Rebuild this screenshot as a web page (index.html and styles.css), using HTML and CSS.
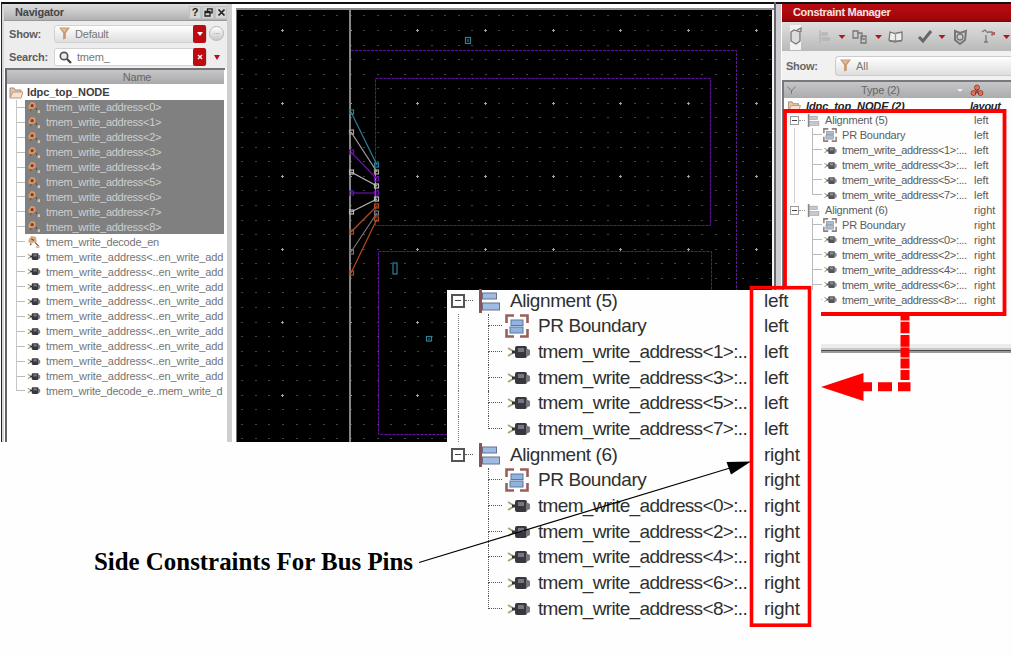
FILE: index.html
```html
<!DOCTYPE html>
<html lang="en">
<head>
<meta charset="utf-8">
<title>Side Constraints For Bus Pins</title>
<link rel="stylesheet" href="styles.css">
</head>
<body>
<svg class="defs" width="0" height="0">
  <symbol id="i-pin" viewBox="0 0 24 16"><path d="M1 4l5 3M1 12l5-3" stroke="#a9a67c" stroke-width="2"/><path d="M5 8h4" stroke="#333" stroke-width="3"/><rect x="8" y="2" width="12" height="12" rx="2" fill="#37373d"/><rect x="11" y="4" width="6" height="4" fill="#77777f"/><path d="M19 4l4 2v5l-4 2z" fill="#77777b"/></symbol>
  <symbol id="i-align" viewBox="0 0 21 24"><path d="M1.500 0v24" stroke="#8e5254" stroke-width="3"/><rect x="3.500" y="4" width="14" height="6" fill="#9fbbe2" stroke="#66718d"/><rect x="3.500" y="14" width="17" height="7" fill="#9fbbe2" stroke="#66718d"/></symbol>
  <symbol id="i-bound" viewBox="0 0 24 24"><path d="M1.500 9V1.500H9M15 1.500h7.500V9M22.500 15v7.500H15M9 22.500H1.500V15" fill="none" stroke="#98605b" stroke-width="2.600"/><rect x="6" y="6" width="12" height="5.500" fill="#8fb4e2" stroke="#5d76a0"/><rect x="5" y="13" width="13" height="6" fill="#8fb4e2" stroke="#5d76a0"/></symbol>
  <symbol id="i-net" viewBox="0 0 14 14"><path d="M1 5l3-4 4 1 1 5-4 2-4-1z" fill="#d59c69"/><circle cx="5" cy="5" r="1.700" fill="#8b332b"/><path d="M4 9l-1 2M9 7l1 3" stroke="#5b4033"/><rect x="11" y="10" width="2.500" height="3" fill="#dfc2ae"/></symbol>
  <symbol id="i-bulb" viewBox="0 0 14 14"><path d="M1 5l3-4 5 1 1 5-5 2-4-1z" fill="#d7ab81"/><path d="M4 4l3 2M8 8l4 4M4 9l-1 2" stroke="#72533c" stroke-width="1.300"/><path d="M9 13h4" stroke="#dfb994" stroke-width="2"/></symbol>
  <symbol id="i-folder" viewBox="0 0 14 13"><path d="M1 12V2h4l1 2h6v3" fill="#e9c3a5" stroke="#a58f80"/><path d="M1 12l3-6h10l-2 6z" fill="#f5e2d2" stroke="#b99a82"/></symbol>
  <symbol id="i-funnel" viewBox="0 0 12 13"><path d="M0 0h12L7.500 6v6l-3 1V6z" fill="#c99a72"/><path d="M2 1h7L6 5z" fill="#e2bb97"/></symbol>
</svg>
<div class="window">
  <section class="nav">
    <div class="nav-title"><b>Navigator</b><span class="win-btns"><i>?</i>
      <i><svg width="9" height="9"><path d="M3.500 3V.9h4.600v4H6M1 3.500h5v4.500H1zM1 4.500h5" fill="none" stroke="#222" stroke-width="1.300"/></svg></i>
      <i><svg width="9" height="9"><path d="M1.500 1.500l6 6M7.500 1.500l-6 6" stroke="#222" stroke-width="1.700"/></svg></i></span></div>
    <div class="field-row r-show"><label>Show:</label>
      <div class="field grad"><svg width="11" height="13"><use href="#i-funnel"/></svg><span>Default</span><em><svg width="6" height="4"><path d="M0 0h6L3 4z" fill="#fff"/></svg></em></div>
      <div class="round">...</div></div>
    <div class="field-row"><label>Search:</label>
      <div class="field"><svg width="13" height="13" viewBox="0 0 13 13"><circle cx="5" cy="5" r="3.700" fill="#eee" stroke="#555" stroke-width="1.700"/><path d="M8 8l4 4" stroke="#444" stroke-width="2.300"/></svg><span>tmem_</span><em><svg width="6" height="6"><path d="M1 1l4 4M5 1L1 5" stroke="#fff" stroke-width="1.300"/></svg></em></div>
      <svg class="tri" width="6" height="5"><path d="M0 0h6L3 5z" fill="#b90f12"/></svg></div>
    <div class="nav-table">
      <div class="nav-head">Name</div>
      <div class="nav-root"><svg width="14" height="13"><use href="#i-folder"/></svg><b>ldpc_top_NODE</b></div>
      <div class="nav-rows" id="nav-rows"></div>
    </div>
  </section>
  <section class="canvas">
    <svg id="layout" width="536" height="432" viewBox="237 10 536 432">
      <g id="grid"></g>
      <path d="M350 9v433" stroke="#858585" stroke-width="2"/>
      <g fill="none" stroke="#6410a4" stroke-width="1" stroke-dasharray="3 1">
        <path d="M351 50.500H736.500V300"/><path d="M375.500 78.500H710.500V225.500H375.500z"/><path d="M378.500 251.500H711.500V434.500H378.500z"/>
      </g>
      <g fill="none" stroke="#2e7f97" stroke-width="1.200">
        <rect x="465.500" y="37.500" width="5" height="6"/><path d="M468 39v3"/><rect x="393" y="263" width="4" height="11"/><rect x="426.500" y="336.500" width="5" height="4.500"/><path d="M428 339h2"/>
      </g>
      <path d="M375.500 170v30" stroke="#999"/>
      <g id="fan" fill="none"></g>
    </svg>
  </section>
  <section class="cm">
    <div class="cm-title">Constraint Manager</div>
    <div class="cm-tools">
      <svg width="229" height="29" viewBox="782 22 229 29">
        <rect x="790" y="25" width="11" height="25" fill="#f2f2f2"/>
        <g fill="none" stroke="#777" stroke-width="1.300">
          <path d="M791 41V32l3-2 6 2v9l-4 3zM797 30l4-2v4" fill="#ddd"/>
          <path d="M820 30v13M822 33h5v2h-5zM822 38h7v2h-7z" stroke="#b4b4b4"/>
          <path d="M853 31h5v7h-5zM857 33h5v7M861 36h5v7h-5zM863 39h2"/>
          <path d="M890 32l5 1.500 7-1.500v8l-7 2-6-2z" fill="#eee"/><path d="M895.500 33v9" stroke="#998"/>
          <path d="M889 41h13"/>
          <path d="M955 31l5 2 6-2-1 9-5 4-5-4z" stroke-width="2"/><circle cx="960" cy="37" r="3"/>
          <path d="M982 32l3-2 3 3M988 32h4v4M986 35v7M984 42h4"/>
        </g>
        <path d="M919 37l4 4 8-10" fill="none" stroke="#666" stroke-width="3"/>
        <rect x="992" y="32" width="3" height="3" fill="#a66"/>
        <path d="M838.500 35h7l-3.500 4zM875 35h7l-3.500 4zM938.500 35h7l-3.500 4zM1003 35h7l-3.500 4z" fill="#b4161a"/>
      </svg>
    </div>
    <div class="cm-show"><label>Show:</label><div><svg width="11" height="13"><use href="#i-funnel"/></svg><span>All</span></div></div>
    <div class="cm-body">
      <div class="cm-head"><svg width="9" height="9"><path d="M.5.500L4.500 5l4-4.500M4.500 5v3" fill="none" stroke="#777"/></svg><span>Type (2)</span><i></i>
        <svg class="balls" width="15" height="13"><g fill="#d9755f" stroke="#a3402f"><circle cx="7" cy="3.500" r="2.500"/><circle cx="3.500" cy="9" r="2.500"/><circle cx="10.500" cy="9" r="2.500"/></g><path d="M5 5l4 5M9 5l-4 5" stroke="#8a2318"/></svg></div>
      <div class="cm-root"><svg width="14" height="12"><use href="#i-folder"/></svg><b>ldpc_top_NODE (2)</b><b class="lay">layout</b></div>
      <div class="tree small" id="tree-small"></div>
    </div>
    <div class="cm-foot"></div>
  </section>
</div>
<div class="callout"><div class="tree big" id="tree-big"></div></div>
<svg class="marks" width="1013" height="657" viewBox="0 0 1013 657">
  <path d="M785 289V111H1004.500V314H821" fill="none" stroke="#fe0000" stroke-width="3.800"/>
  <rect x="751.500" y="287.700" width="58" height="337.500" fill="none" stroke="#fe0000" stroke-width="3.600"/>
  <g fill="#fe0000"><path d="M900.500 316h9v4.500h-9zM900.500 321.700h9v11.600h-9zM900.500 335h9v11.700h-9zM900.500 347.500h9v10h-9zM900.500 358.500h9v10h-9zM900.500 370h9v10h-9zM898 382.300h12.500v9H898zM878 382.300h14v9h-14zM863 382.300h9v9h-9z"/><path d="M821 387l42.500-14v28z"/></g>
  <path d="M419 562.500L730 468" stroke="#000" stroke-width="1.200"/><path d="M751 461.500L726.500 462l4.500 12.500z"/>
</svg>
<p class="caption">Side Constraints For Bus Pins</p>
<script src="app.js"></script>
</body>
</html>
```

FILE: styles.css
```css
* { box-sizing: border-box; }
body { margin: 0; width: 1013px; height: 657px; overflow: hidden; position: relative; background: #fefefe; font-family: "Liberation Sans", Arial, sans-serif; }
.defs { position: absolute; }
.window { display: flex; align-items: flex-start; width: 1010px; margin-left: 1px; padding-top: 2px; }

.nav { width: 235px; height: 440px; background: linear-gradient(90deg, #d7d7d9 0 2px, #fff 2px 225px, #cfcfd1 225px 230px, #fff 230px); border-left: 1px solid #162832; border-top: 2px solid #111; display: flex; flex-direction: column; }
.nav-title { height: 17px; width: 223px; margin-left: 2px; padding-left: 11px; display: flex; justify-content: space-between; align-items: center; font-size: 11px; color: #444; background: linear-gradient(#dededf, #b1b1b3); border-bottom: 1px solid #999; }
.nav-title b { letter-spacing: -.2px; }
.win-btns { display: flex; gap: 1px; }
.win-btns i { width: 12px; height: 13px; display: flex; align-items: center; justify-content: center; font: bold 11px "Liberation Sans", sans-serif; background: #d5d5d5; border: 1px solid #c1c1c1; color: #222; }
.field-row { display: flex; align-items: center; width: 223px; height: 22px; margin-left: 2px; padding-left: 5px; background: #ededee; }
.field-row.r-show { height: 25px; }
.field-row label { width: 45px; font-size: 11px; font-weight: bold; color: #5c5c5c; letter-spacing: -.2px; white-space: nowrap; }
.field { width: 153px; height: 18px; display: flex; align-items: center; padding-left: 4px; gap: 5px; background: #fff; border: 1px solid #d2d2d2; border-radius: 3px; font-size: 11px; color: #777; letter-spacing: -.2px; }
.field.grad { background: linear-gradient(#fff, #dedede); }
.field em { margin-left: auto; width: 13px; height: 18px; background: #bd0b10; border-radius: 2px; display: flex; align-items: center; justify-content: center; }
.round { width: 15px; height: 15px; margin-left: 2px; border-radius: 50%; border: 1px solid #b6b6b6; background: linear-gradient(#fff, #c8c8c8); font-size: 8px; line-height: 10px; text-align: center; color: #888; }
.tri { margin-left: 7px; }
.nav-table { width: 220px; margin: 0 0 0 3px; border-left: 2px solid #63636a; border-top: 2px solid #74747a; background: #fff; flex: 1; font-size: 11px; }
.nav-head { height: 14px; padding-left: 43px; text-align: center; line-height: 14px; color: #666; background: linear-gradient(#c6c6c7, #a9a9ab); letter-spacing: -.2px; width: 217px; }
.nav-root { height: 16px; display: flex; align-items: center; padding-left: 2px; gap: 4px; color: #3d3d3d; letter-spacing: -.1px; }
.nav-rows { margin-left: 9px; display: flex; flex-direction: column; }
.nav-row { height: 14.93px; display: flex; width: 208px; overflow: hidden; align-items: center; color: #747474; white-space: nowrap; border-left: 1px solid #c6c6c6; letter-spacing: -.1px; }
.nav-row::before { content: ""; width: 8px; height: 1px; background: #bcbcbc; flex: none; }
.nav-row:last-child { border-image: linear-gradient(#c6c6c6 50%, transparent 50%) 1; }
.nav-row div { display: flex; align-items: center; height: 100%; width: 199px; padding-left: 2px; overflow: hidden; }
.nav-row svg { width: 14px; height: 13px; margin-right: 5px; flex: none; }
.nav-row.pin svg { width: 14px; height: 9px; }
.nav-row.net div { background: #808080; color: #cfcfcf; }
.nav-row.net { letter-spacing: -.28px; }
.nav-row.dec { letter-spacing: -.22px; }

.canvas { width: 540px; height: 440px; padding: 8px 1px 0 1px; border-right: 2px solid #65656b; background: #000; box-shadow: inset 0 2px #111, inset 0 6px #fff, inset 0 8px #8d8d8d, inset 1px 0 #777, inset -2px 0 #f3f3f3; }
.canvas svg { display: block; }

.cm { width: 235px; padding: 2px 0 0 6px; border-top: 2px solid #111; padding-top: 0; background: linear-gradient(#cdcdd1, #cdcdd1) 0 0 / 5px 100% no-repeat; }
.cm-title { height: 18px; padding-left: 11px; line-height: 16px; font-size: 11px; font-weight: bold; letter-spacing: -.32px; color: #f5e5e3; background: linear-gradient(#b90d12, #a3060a 80%, #7d0508); }
.cm-tools { height: 29px; background: linear-gradient(#dfdfdf, #b8bab8); }
.cm-tools svg { display: block; }
.cm-show { height: 29px; display: flex; align-items: center; padding-left: 4px; background: #f1f1f2; }
.cm-show label { width: 49px; font-size: 11px; font-weight: bold; color: #666; letter-spacing: -.3px; }
.cm-show div { flex: 1; height: 20px; display: flex; align-items: center; gap: 5px; padding-left: 4px; border: 1px solid #ccc; border-right: 0; border-radius: 4px 0 0 4px; background: linear-gradient(#fff, #dedede); font-size: 11px; color: #777; }
.cm-body { height: 264px; border-left: 2px solid #77777c; border-top: 2px solid #77777c; background: #fefefe; font-size: 11px; }
.cm-head { height: 16px; display: flex; align-items: center; background: linear-gradient(#c6c6c7, #acacae); color: #666; padding-left: 3px; }
.cm-head span { margin-left: 65px; letter-spacing: -.2px; }
.cm-head i { margin-left: 57px; border: 3px solid transparent; border-top: 3px solid #eee; border-bottom: 0; }
.cm-head .balls { margin-left: 7px; }
.cm-root { height: 15px; display: flex; align-items: center; padding-left: 3px; font-style: italic; color: #222; white-space: nowrap; }
.cm-root b { width: 164px; margin-left: 5px; letter-spacing: -.1px; }
.cm-root b.lay { width: auto; margin-left: 0; letter-spacing: -.3px; }
.cm-foot { height: 9px; margin-left: -5px; background: linear-gradient(#ececec 0 4px, #c9c9c9 4px 6px, #4b4b4b 6px 7px, #999 7px); }

.tree { display: flex; flex-direction: column; }
.t-row { display: flex; align-items: center; white-space: nowrap; }
.t-row .side { margin-left: auto; }
.t-row svg { flex: none; }
.box { flex: none; display: flex; align-items: center; justify-content: center; background: #fff; }
.box::before { content: ""; height: 1px; width: 60%; background: #444; }
.elbow { flex: none; align-self: stretch; display: grid; grid-template-rows: 1fr 1fr; }
.elbow::before, .elbow::after { content: ""; }
.stub { flex: none; height: 0; }
.trunk { flex: none; align-self: stretch; }

.small { color: #5b5b5b; padding-left: 6px; }
.small .t-row { height: 14.94px; }
.small .box { width: 9px; height: 9px; border: 1px solid #999; }
.small .stub { width: 6px; border-top: 1px dotted #999; }
.small .trunk { width: 5px; }
.small .trunk.line { border-right: 1px solid #d0d0d0; }
.small .elbow { width: 10px; margin-left: 17px; }
.small .elbow::before { border-left: 1px solid #bbb; border-bottom: 1px solid #bbb; }
.small .elbow::after { border-left: 1px solid #bbb; }
.small .last .elbow::after, .big .last .elbow::after { border-left: 0; }
.small .parent svg { width: 13px; height: 13px; margin: 0 5px 0 2px; opacity: .75; filter: grayscale(.8); }
.small .kid svg { width: 15px; height: 9px; margin: 0 4px 0 1px; opacity: .85; }
.small .bound svg { width: 14px; height: 14px; margin: 0 5px 0 1px; filter: grayscale(.5); }
.small .side { width: 37px; }
.small .parent .name, .small .bound .name { letter-spacing: -.2px; }
.small .kid.pin .name { letter-spacing: -.34px; }

.callout { position: absolute; left: 447px; top: 290px; width: 374px; height: 367px; background: #fefefe; }
.big { width: 354px; color: #303030; font-size: 19px; padding-left: 4px; margin-top: -2px; }
.big .t-row { height: 25.66px; }
.big .box { width: 14px; height: 14px; border: 2px solid #555; }
.big .stub { width: 8px; border-top: 1px dotted #555; }
.big .trunk { width: 8px; }
.big .trunk.line { border-right: 1px dotted #777; }
.big .elbow { width: 14px; margin-left: 29px; }
.big .elbow::before { border-left: 1px dotted #555; border-bottom: 1px dotted #555; }
.big .elbow::after { border-left: 1px dotted #555; }
.big .parent svg { width: 21px; height: 24px; margin: 0 10px 0 6px; }
.big .kid svg { width: 24px; height: 16px; margin: 0 7px 0 5px; }
.big .bound svg { width: 24px; height: 24px; margin: 0 9px 0 3px; }
.big .name { letter-spacing: -.42px; }
.big .pin .name { letter-spacing: -.66px; }
.big .side { width: 37px; letter-spacing: -.25px; }

.marks { position: absolute; left: 0; top: 0; }
.caption { position: absolute; left: 94px; top: 548px; margin: 0; font: bold 24.9px/28px "Liberation Serif", "Times New Roman", serif; color: #000; white-space: nowrap; }
```

FILE: app.js
```js
const use = (id) => `<svg><use href="#i-${id}"/></svg>`;
const esc = (s) => s.replace(/</g, "&lt;").replace(/>/g, "&gt;");

// Navigator rows
const nav = [];
for (let i = 0; i <= 8; i++) nav.push(["net", "net", `tmem_write_address<${i}>`]);
nav.push(["dec", "bulb", "tmem_write_decode_en"]);
for (let i = 0; i < 9; i++) nav.push(["pin", "pin", "tmem_write_address<..en_write_add"]);
nav.push(["pin dec", "pin", "tmem_write_decode_e..mem_write_d"]);
document.getElementById("nav-rows").innerHTML = nav
  .map(([c, i, t]) => `<div class="nav-row ${c}"><div>${use(i)}<span>${esc(t)}</span></div></div>`).join("");

// Constraint tree, drawn at two sizes
function tree(dots) {
  const groups = [[5, "left", [1, 3, 5, 7]], [6, "right", [0, 2, 4, 6, 8]]];
  return groups.map(([n, side, bits], g) => {
    const trunk = `<i class="trunk ${g === 0 ? "line" : ""}"></i><i class="elbow"></i>`;
    const s = `<span class="side">${side}</span>`;
    return `<div class="t-row parent"><i class="box"></i><i class="stub"></i>${use("align")}<span class="name">Alignment (${n})</span>${s}</div>` +
      `<div class="t-row kid bound">${trunk}${use("bound")}<span class="name">PR Boundary</span>${s}</div>` +
      bits.map((b, k) => `<div class="t-row kid pin ${k === bits.length - 1 ? "last" : ""}">${trunk}${use("pin")}<span class="name">tmem_write_address&lt;${b}&gt;:${dots}</span>${s}</div>`).join("");
  }).join("");
}
document.getElementById("tree-small").innerHTML = tree("...");
document.getElementById("tree-big").innerHTML = tree("..");

// Layout grid: every fifth point is a major one
let dots = "";
for (let c = -3; c <= 36; c++) for (let r = -1; r <= 28; r++) {
  const x = Math.round(282 + c * 13.53), y = Math.round(30 + r * 14.58);
  const major = c % 5 === 0 && r % 5 === 0;
  dots += major ? `<path d="M${x - 1} ${y}h3v1h-3zM${x} ${y - 1}h1v3h-1z" fill="#a0a0a0"/>`
    : `<rect x="${x}" y="${y}" width="2" height="1" fill="#444"/>`;
}
document.getElementById("grid").innerHTML = dots;

// Pin flight lines
const fan = [[112, 165, "#2e7f97"], [132, 172, "#a9a09c"], [152, 179, "#6a10a8"], [172, 186, "#b9b9b9"], [193, 193, "#6a10a8"], [212, 199, "#b9b9b9"], [232, 206, "#ac4b29"], [252, 213, "#777"], [273, 219, "#b54a22"]];
document.getElementById("fan").innerHTML = fan.map(([a, b, c]) =>
  `<g stroke="${c}" stroke-width="1.200"><path d="M351 ${a}L377 ${b}"/><rect x="349.500" y="${a - 2}" width="4" height="4"/><rect x="374.500" y="${b - 2}" width="4" height="4"/></g>`).join("");
```
